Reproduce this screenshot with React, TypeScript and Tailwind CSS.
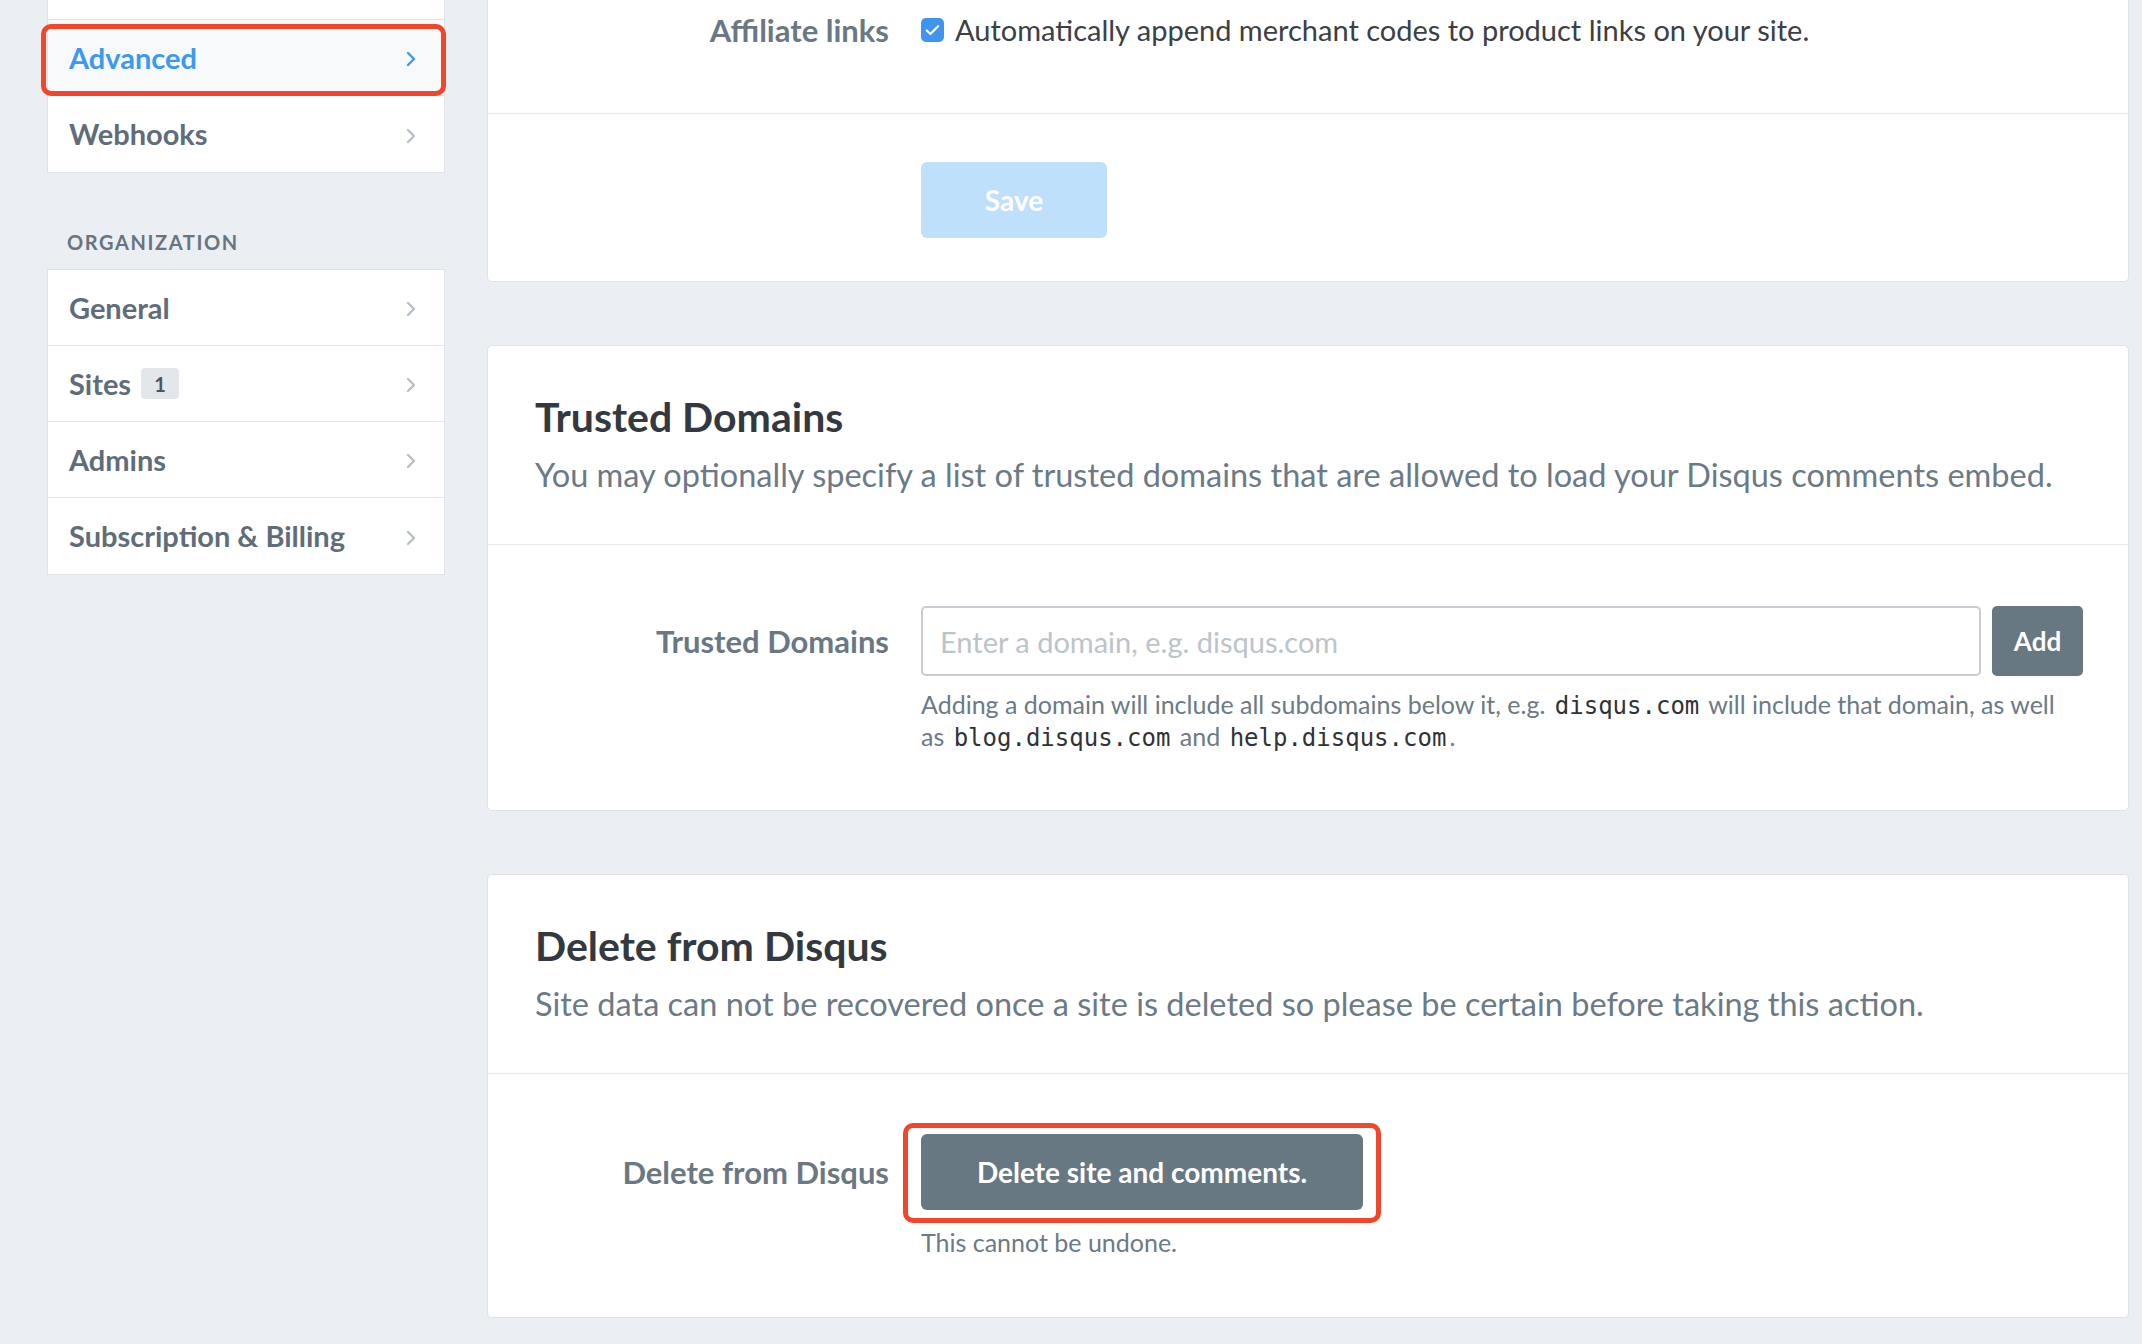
import { Check } from "lucide-react";

const font = { fontFamily: "Lato, 'Noto Sans', sans-serif" };

function Chevron({ color }: { color: string }) {
  return (
    <svg width="12" height="16" viewBox="0 0 12 16" fill="none" className={`${color} mt-[3px]`}>
      <path d="M3 2l6 6-6 6" stroke="currentColor" strokeWidth="2.4" strokeLinecap="round" strokeLinejoin="round" />
    </svg>
  );
}

function NavRow({
  label,
  active,
  badge,
}: {
  label: string;
  active?: boolean;
  badge?: string;
}) {
  return (
    <div
      className={`relative flex h-[76px] items-center justify-between pl-[21px] pr-[27px] ${
        active ? "bg-[#f7f9fb]" : "bg-white"
      }`}
    >
      <div className="flex items-center gap-[10px]">
        <span
          className={`text-[29px] font-bold ${
            active ? "text-[#3b9af0]" : "text-[#5e6d79]"
          }`}
        >
          {label}
        </span>
        {badge && (
          <span className="flex h-[31px] w-[38px] items-center justify-center rounded-[4px] bg-[#e3e7ec] text-[20px] font-bold text-[#4b5660]">
            {badge}
          </span>
        )}
      </div>
      <Chevron color={active ? "text-[#3b9af0]" : "text-[#b8bfc6]"} />
      {active && (
        <div className="pointer-events-none absolute -bottom-[1px] -left-[7px] -right-[2px] top-[4px] rounded-[10px] border-[5px] border-[#f2462a]" />
      )}
    </div>
  );
}

function Code({ children }: { children: string }) {
  return (
    <code
      className="mx-[3px] text-[24px] leading-[28px] text-[#2f3336]"
      style={{ fontFamily: "'DejaVu Sans Mono', monospace" }}
    >
      {children}
    </code>
  );
}

function CardHeader({ title, text }: { title: string; text: string }) {
  return (
    <div className="border-b border-[#e6e9ec] px-[47px] pb-[49px] pt-[47px]">
      <h2 className="text-[41px] font-bold leading-[48px] text-[#33393e]">
        {title}
      </h2>
      <p className="mt-[14px] text-[32.5px] leading-[40px] text-[#6b7a86]">
        {text}
      </p>
    </div>
  );
}

export default function App() {
  return (
    <div
      className="flex h-[1344px] overflow-hidden bg-[#ebeef2] pl-[47px] pr-[13px]"
      style={font}
    >
      <aside className="w-[398px] shrink-0">
        <div className="divide-y divide-[#e3e7eb] border-x border-b border-[#dfe3e8] bg-white">
          <div className="h-[20px]" />
          <NavRow label="Advanced" active />
          <NavRow label="Webhooks" />
        </div>

        <div className="mt-[57px] pl-[20px] text-[20px] font-bold uppercase leading-[24px] tracking-[1.6px] text-[#66757f]">
          Organization
        </div>

        <div className="mt-[15px] divide-y divide-[#e3e7eb] border border-[#dfe3e8] bg-white">
          <NavRow label="General" />
          <NavRow label="Sites" badge="1" />
          <NavRow label="Admins" />
          <NavRow label="Subscription & Billing" />
        </div>
      </aside>

      <main className="ml-[42px] flex flex-1 flex-col gap-[63px]">
        <section className="rounded-b-[5px] border-x border-b border-[#dfe3e8] bg-white">
          <div className="grid h-[114px] grid-cols-[401px_1fr] items-start gap-x-[32px] border-b border-[#e6e9ec] pt-[12px]">
            <div className="text-right text-[31px] font-bold leading-[36px] text-[#6a7884]">
              Affiliate links
            </div>
            <label className="flex items-center gap-[11px] text-[29px] leading-[36px] text-[#3b4045]">
              <span className="flex h-[24px] w-[23px] items-center justify-center rounded-[5px] bg-[#3d95f0]">
                <Check size={17} strokeWidth={3} className="text-white" />
              </span>
              Automatically append merchant codes to product links on your site.
            </label>
          </div>
          <div className="grid grid-cols-[401px_1fr] gap-x-[32px] pb-[43px] pt-[48px]">
            <div />
            <div>
              <button className="h-[76px] w-[186px] rounded-[6px] bg-[#bfe0fb] text-[28px] font-bold text-white">
                Save
              </button>
            </div>
          </div>
        </section>

        <section className="rounded-[5px] border border-[#dfe3e8] bg-white">
          <CardHeader
            title="Trusted Domains"
            text="You may optionally specify a list of trusted domains that are allowed to load your Disqus comments embed."
          />
          <div className="grid grid-cols-[401px_1fr] gap-x-[32px] pb-[58px] pr-[45px] pt-[61px]">
            <div className="flex h-[70px] items-center justify-end text-[31px] font-bold text-[#6a7884]">
              Trusted Domains
            </div>
            <div>
              <div className="flex gap-[11px]">
                <input
                  placeholder="Enter a domain, e.g. disqus.com"
                  className="h-[70px] flex-1 rounded-[5px] border-2 border-[#c8cdd3] px-[17px] text-[29px] text-[#33393e] outline-none placeholder:text-[#bcc4cb]"
                />
                <button className="h-[70px] w-[91px] rounded-[5px] bg-[#687883] text-[26px] font-bold text-white">
                  Add
                </button>
              </div>
              <p className="mt-[12px] text-[25px] leading-[32px] text-[#6b7a86]">
                <span>Adding a domain will include all subdomains below it, e.g.</span>{" "}
                <Code>disqus.com</Code>{" "}
                <span>will include that domain, as well</span> <span>as</span>{" "}
                <Code>blog.disqus.com</Code> <span>and</span>{" "}
                <Code>help.disqus.com</Code>
                <span>.</span>
              </p>
            </div>
          </div>
        </section>

        <section className="rounded-[5px] border border-[#dfe3e8] bg-white">
          <CardHeader
            title="Delete from Disqus"
            text="Site data can not be recovered once a site is deleted so please be certain before taking this action."
          />
          <div className="grid grid-cols-[401px_1fr] gap-x-[32px] pb-[59px] pt-[60px]">
            <div className="flex h-[76px] items-center justify-end text-[31px] font-bold text-[#6a7884]">
              Delete from Disqus
            </div>
            <div>
              <div className="relative inline-block">
                <button className="h-[76px] w-[442px] rounded-[6px] bg-[#687883] text-[28px] font-bold text-white">
                  Delete site and comments.
                </button>
                <div className="pointer-events-none absolute -bottom-[13px] -left-[18px] -right-[18px] -top-[11px] rounded-[10px] border-[5px] border-[#f2462a]" />
              </div>
              <p className="mt-[16px] text-[25px] leading-[32px] text-[#6b7a86]">
                This cannot be undone.
              </p>
            </div>
          </div>
        </section>
      </main>
    </div>
  );
}
